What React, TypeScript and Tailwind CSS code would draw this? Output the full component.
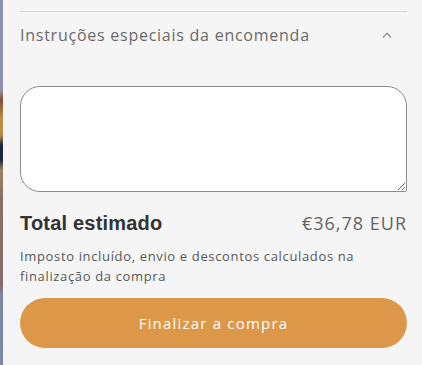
import { useState } from 'react'

export default function App() {
  const [note, setNote] = useState('')

  return (
    <div className="flex h-[365px] w-[422px] overflow-hidden font-['Open_Sans',sans-serif]">
      {/* page behind the drawer */}
      <div className="w-[3px] shrink-0 bg-[linear-gradient(to_bottom,#8d92b3_0px,#8d92b3_90px,#8a4b3b_100px,#b8903f_118px,#b8903f_135px,#1f2742_145px,#1f2742_160px,#9c8262_170px,#8d6d6b_200px,#8a6a6a_285px,#7f87a9_295px,#8088aa_365px)]" />

      <div className="flex-1 bg-[#f5f5f5] pl-[17px] pr-[15px]">
        <div className="mt-[11px] border-t border-[#d9d9d9]">
          <button className="flex h-[46px] w-full items-center justify-between text-left">
            <span className="text-[16px] tracking-[0.75px] text-[#6a6a6a]">Instruções especiais da encomenda</span>
            <svg width="10" height="6" viewBox="0 0 10 6" className="mr-[15px]">
              <path d="M1 5.5 L5 1.2 L9 5.5" fill="none" stroke="#707070" strokeWidth="1.1" />
            </svg>
          </button>

          <div className="mt-[28px] h-[97px] border-b border-[#d6d6d6]">
            <textarea
              value={note}
              onChange={(e) => setNote(e.target.value)}
              className="relative block h-[106px] w-full resize-y rounded-[20px] rounded-br-[2px] border border-[#8c8c8c] bg-white p-3 text-[14px] outline-none"
            />
          </div>
        </div>

        <div className="mt-[26px] flex h-[28px] items-center justify-between">
          <span className="font-['Liberation_Sans',sans-serif] text-[20px] font-bold tracking-[0.2px] text-[#333]">Total estimado</span>
          <span className="text-[18px] tracking-[1px] text-[#646464]">€36,78 EUR</span>
        </div>

        <p className="mt-[9px] text-[13px] leading-[20px] tracking-[0.65px] text-[#585858]">
          Imposto incluído, envio e descontos calculados na finalização da compra
        </p>

        <button className="mt-[12px] h-[50px] w-full rounded-full bg-[#dc9748] text-[15px] font-medium tracking-[1.2px] text-white">
          Finalizar a compra
        </button>
      </div>
    </div>
  )
}
